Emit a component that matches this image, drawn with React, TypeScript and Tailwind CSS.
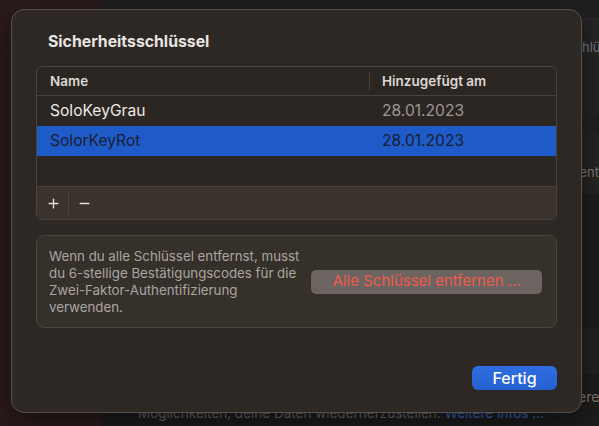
import { Plus, Minus } from 'lucide-react'

const keys = [
  { name: 'SoloKeyGrau', date: '28.01.2023', selected: false },
  { name: 'SolorKeyRot', date: '28.01.2023', selected: true },
]

function BackgroundWindow() {
  return (
    <div className="flex h-[426px] w-[599px] overflow-hidden font-['Inter',sans-serif] text-[13px]">
      <div className="w-[100px] shrink-0 bg-[#2b1b1c]" />
      <div className="flex flex-1 flex-col bg-[#1e1d1d]">
        <div className="h-[19px] shrink-0 border-b border-[#2a2828] bg-[#211f1f]" />
        <div className="flex flex-1 flex-col pl-[35px]">
          <div className="flex h-[95px] items-center overflow-hidden whitespace-nowrap bg-[#262525] pb-[38px] pl-[364px] text-[#7d7a79]">
            Sicherheitsschlüssel
          </div>
          <div className="h-[20px] bg-[#232222]" />
          <div className="flex h-[60px] items-center overflow-hidden whitespace-nowrap bg-[#262525] pt-[18px] pl-[382px] text-[#7d7a79]">
            Schlüssel entfernen
          </div>
          <div className="h-[135px] bg-[#1f1e1e]" />
          <div className="h-[45px] bg-[#232222]" />
          <div className="flex h-[52px] flex-col overflow-hidden whitespace-nowrap">
            <div className="pl-[414px] pt-[14px] text-[14px] leading-[17px] text-[#7d7a79]">Weitere</div>
            <div className="pl-[3px] text-[13.5px] leading-[17px] text-[#6f6c6b]">
              Möglichkeiten, deine Daten wiederherzustellen.{' '}
              <span className="text-[#3b6fc9]">Weitere Infos ...</span>
            </div>
          </div>
        </div>
      </div>
    </div>
  )
}

export default function App() {
  return (
    <div className="relative h-[426px] w-[599px] overflow-hidden bg-[#1e1d1d]">
      <BackgroundWindow />

      <div className="absolute left-[11px] top-[9px] flex h-[404px] w-[571px] flex-col rounded-[13px] border border-[#57504c] bg-[#2e2824] px-[24px] pt-[22px] font-['Inter',sans-serif] shadow-[0_10px_30px_rgba(0,0,0,0.5)]">
        <h1 className="ml-[12px] text-[15.8px] font-bold leading-[20px] text-[#e8e5e2]">Sicherheitsschlüssel</h1>

        <div className="mt-[14px] overflow-hidden rounded-[6px] border border-[#4a4440] bg-[#2c2622]">
          <div className="flex h-[29px] items-center border-b border-[#48423e] text-[13.5px] font-semibold text-[#dcd8d5]">
            <div className="flex h-full flex-1 items-center pl-[13px]">Name</div>
            <div className="h-[19px] w-px bg-[#48423e]" />
            <div className="w-[186px] pl-[12px]">Hinzugefügt am</div>
          </div>

          {keys.map((k) => (
            <div
              key={k.name}
              className={
                k.selected
                  ? 'flex h-[30px] items-center bg-[#1f5ac9] text-[15.6px] text-[#1a2030]'
                  : 'flex h-[30px] items-center text-[15.6px] text-[#ece9e6]'
              }
            >
              <div className="flex-1 pl-[13px]">{k.name}</div>
              <div className={k.selected ? 'w-[187px] pl-[13px]' : 'w-[187px] pl-[13px] text-[#9c9794]'}>{k.date}</div>
            </div>
          ))}

          <div className="h-[30px]" />

          <div className="flex h-[33px] items-center border-t border-[#48423e] bg-[#39322d] text-[#e2dfdc]">
            <button className="flex w-[31px] items-center justify-center pl-[1px]">
              <Plus size={15} strokeWidth={2.2} />
            </button>
            <div className="h-[23px] w-px bg-[#4d4641]" />
            <button className="flex w-[31px] items-center justify-center">
              <Minus size={15} strokeWidth={2.2} />
            </button>
          </div>
        </div>

        <div className="mt-[15px] flex h-[93px] items-center rounded-[8px] border border-[#4b4540] bg-[#36302b] pl-[12px] pr-[14px]">
          <p className="w-[264px] text-[13.3px] leading-[17px] text-[#aaa5a1]">
            Wenn du alle Schlüssel entfernst, musst
            <br />
            du 6-stellige Bestätigungscodes für die
            <br />
            Zwei-Faktor-Authentifizierung
            <br />
            verwenden.
          </p>
          <button className="ml-auto h-[24px] w-[232px] rounded-[5px] bg-[#6b6460] text-[15px] text-[#ef5b4d]">
            Alle Schlüssel entfernen ...
          </button>
        </div>

        <div className="mt-[38px] flex justify-end">
          <button className="h-[24px] w-[85px] rounded-[6px] bg-gradient-to-b from-[#2f6de0] to-[#2561d2] text-[16px] font-medium text-white">
            Fertig
          </button>
        </div>
      </div>
    </div>
  )
}
